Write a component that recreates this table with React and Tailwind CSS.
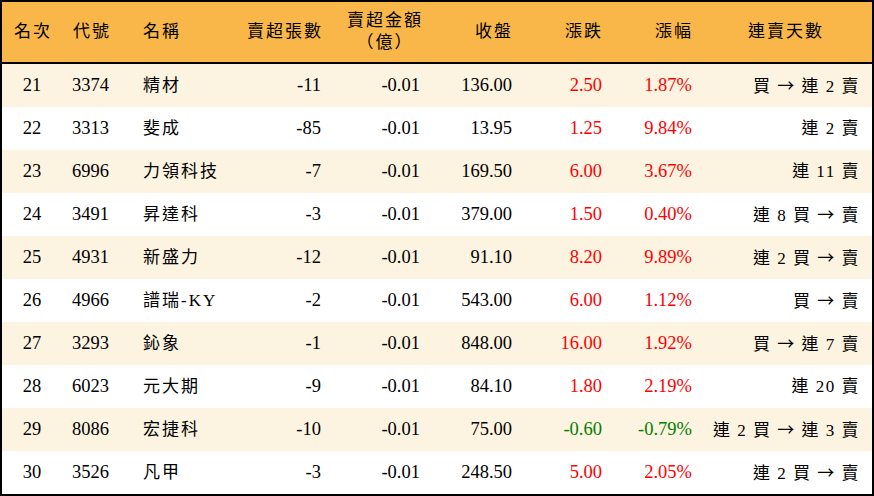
import React from "react";

const rows = [
  ["21", "3374", "精材", "-11", "-0.01", "136.00", "2.50", "1.87%", "買 → 連 2 賣"],
  ["22", "3313", "斐成", "-85", "-0.01", "13.95", "1.25", "9.84%", "連 2 賣"],
  ["23", "6996", "力領科技", "-7", "-0.01", "169.50", "6.00", "3.67%", "連 11 賣"],
  ["24", "3491", "昇達科", "-3", "-0.01", "379.00", "1.50", "0.40%", "連 8 買 → 賣"],
  ["25", "4931", "新盛力", "-12", "-0.01", "91.10", "8.20", "9.89%", "連 2 買 → 賣"],
  ["26", "4966", "譜瑞-KY", "-2", "-0.01", "543.00", "6.00", "1.12%", "買 → 賣"],
  ["27", "3293", "鈊象", "-1", "-0.01", "848.00", "16.00", "1.92%", "買 → 連 7 賣"],
  ["28", "6023", "元大期", "-9", "-0.01", "84.10", "1.80", "2.19%", "連 20 賣"],
  ["29", "8086", "宏捷科", "-10", "-0.01", "75.00", "-0.60", "-0.79%", "連 2 買 → 連 3 賣"],
  ["30", "3526", "凡甲", "-3", "-0.01", "248.50", "5.00", "2.05%", "連 2 買 → 賣"],
];

const font = { fontFamily: '"Liberation Serif", "Noto Sans CJK TC", serif' };

// streak text, arrow drawn in the CJK font so it is full width
function Streak({ text }) {
  const parts = text.split("→");
  return (
    <>
      {parts.map((p, i) => (
        <React.Fragment key={i}>
          {i > 0 && <span className="font-['Noto_Sans_CJK_TC']">→</span>}
          {p}
        </React.Fragment>
      ))}
    </>
  );
}

export default function App() {
  return (
    <div className="w-[874px] h-[496px] bg-white border-2 border-black overflow-hidden text-black" style={font}>
      {/* header */}
      <div className="flex h-[62px] items-center bg-[#f9b749] border-b-2 border-black text-[17px] tracking-[2px]">
        <div className="w-[60px] text-center pl-[2px]">名次</div>
        <div className="w-[70px] pl-[11px]">代號</div>
        <div className="w-[100px] pl-[11px]">名稱</div>
        <div className="w-[100px] text-right pr-[9px]">賣超張數</div>
        <div className="w-[100px] flex justify-end pr-[9px]">
          <div className="text-center leading-[22px]">賣超金額<br />（億）</div>
        </div>
        <div className="w-[90px] text-right pr-[9px]">收盤</div>
        <div className="w-[92px] text-right pr-[11px]">漲跌</div>
        <div className="w-[90px] text-right pr-[11px]">漲幅</div>
        <div className="w-[168px] text-center pr-[4px]">連賣天數</div>
      </div>
      {rows.map((r, i) => {
        const down = r[6].startsWith("-");
        const clr = down ? "text-[#008000]" : "text-[#ff0000]";
        return (
          <div key={r[0]} className={`flex h-[43px] items-center text-[18.5px] ${i % 2 === 0 ? "bg-[#fdf3e1]" : "bg-white"}`}>
            <div className="w-[60px] text-center">{r[0]}</div>
            <div className="w-[70px] pl-[10px]">{r[1]}</div>
            <div className="w-[100px] pl-[11px] text-[17px] tracking-[2px]">{r[2]}</div>
            <div className="w-[100px] text-right pr-[11px]">{r[3]}</div>
            <div className="w-[100px] text-right pr-[12px]">{r[4]}</div>
            <div className="w-[90px] text-right pr-[10px]">{r[5]}</div>
            <div className={`w-[92px] text-right pr-[12px] ${clr}`}>{r[6]}</div>
            <div className={`w-[90px] text-right pr-[12px] ${clr}`}>{r[7]}</div>
            <div className="w-[168px] text-right pr-[12px] text-[17px] tracking-[1.5px] whitespace-pre"><Streak text={r[8]} /></div>
          </div>
        );
      })}
    </div>
  );
}
